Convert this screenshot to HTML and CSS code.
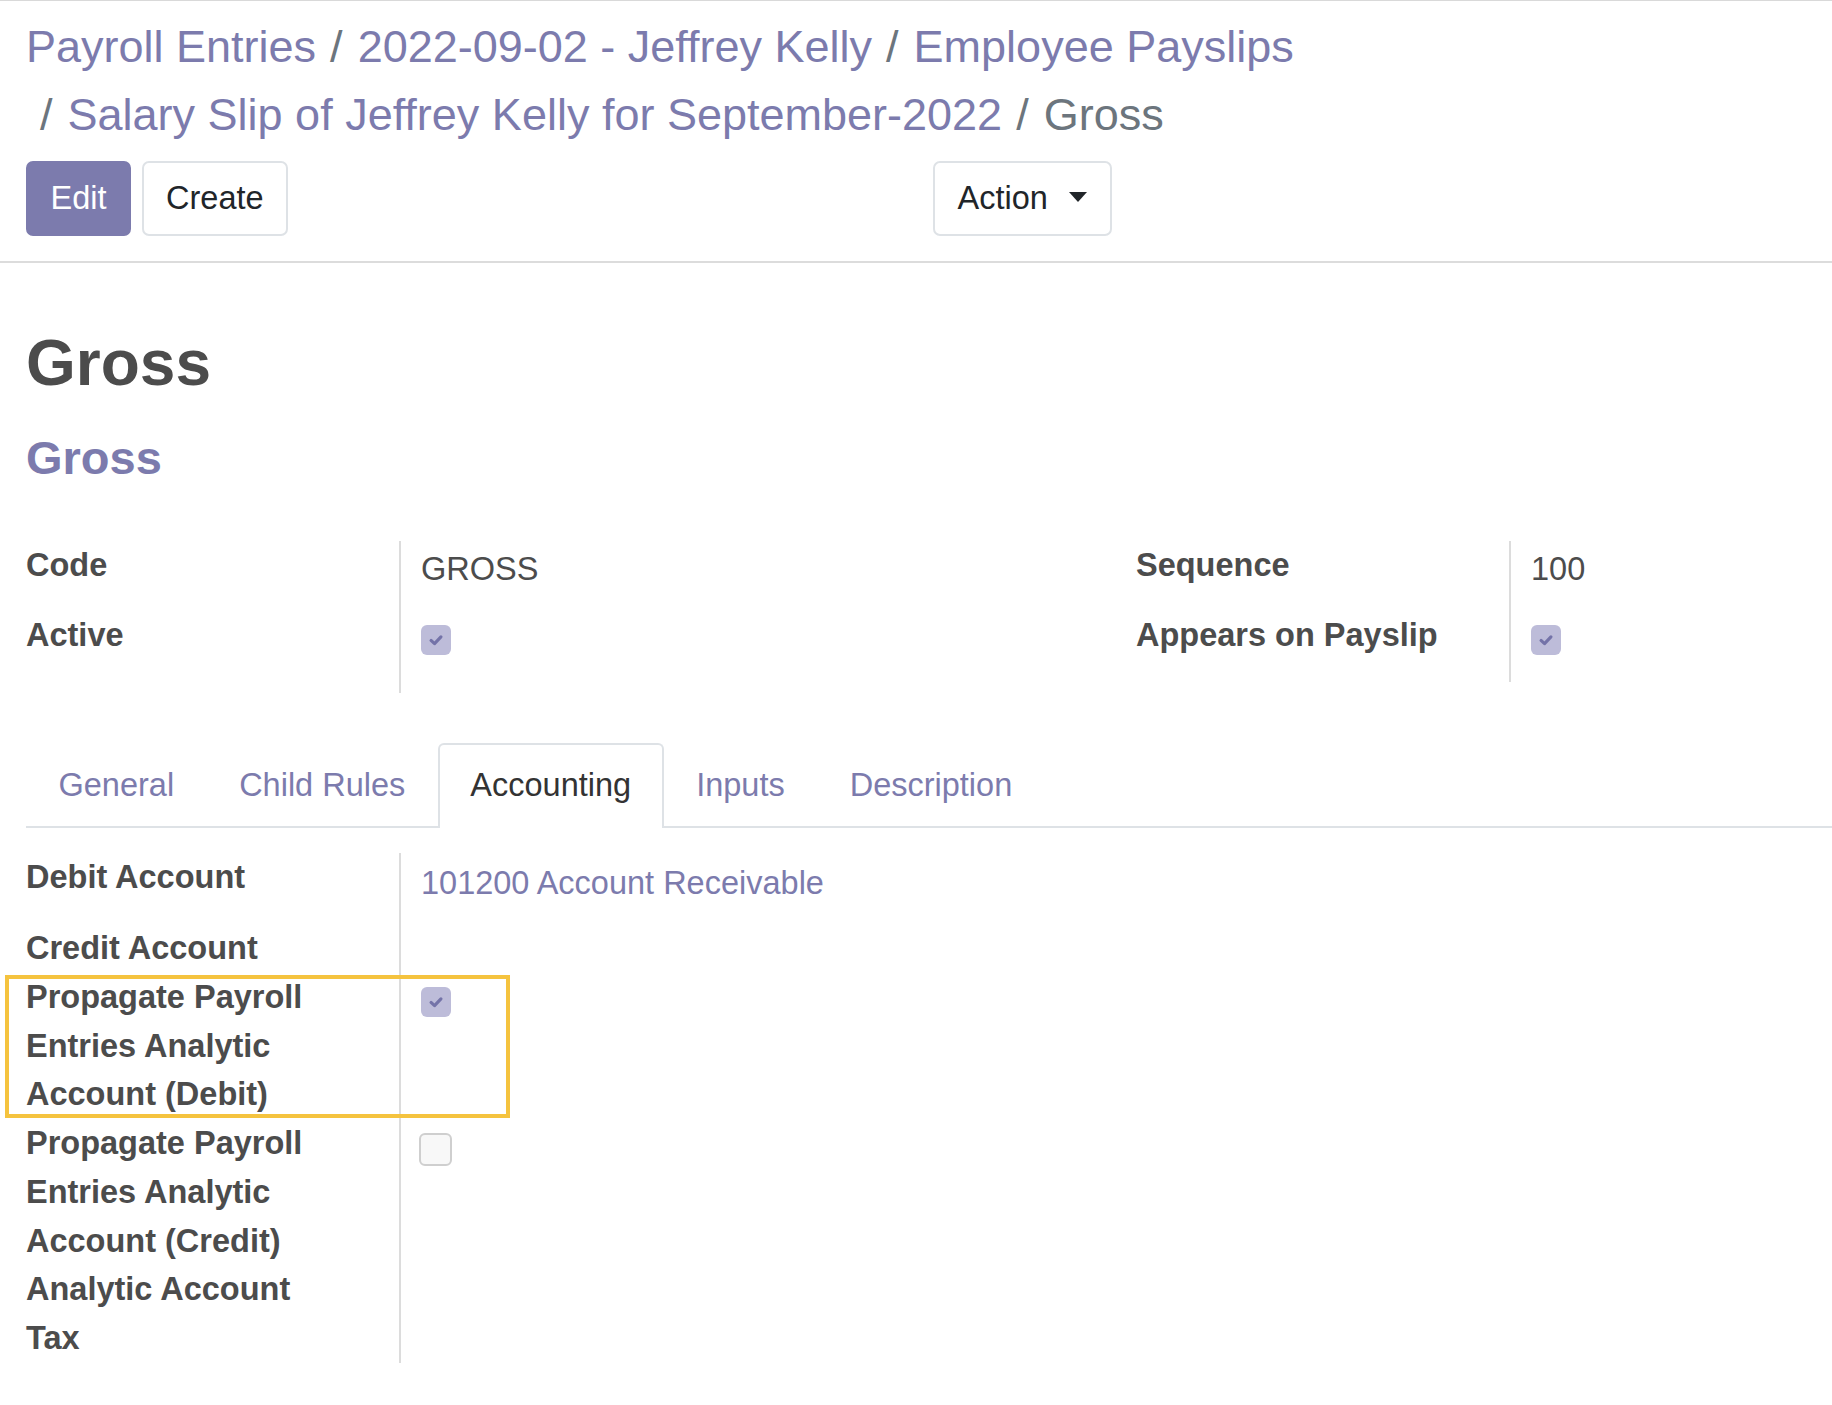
FILE: index.html
```html
<!DOCTYPE html>
<html lang="en">
<head>
<meta charset="utf-8">
<title>Gross - Salary Rule</title>
<link rel="stylesheet" href="styles.css">
</head>
<body>
<div class="page">
  <div class="control-panel">
    <ol class="breadcrumb">
      <li class="crumb"><a class="crumb-link">Payroll Entries</a></li>
      <li class="crumb"><a class="crumb-link">2022-09-02 - Jeffrey Kelly</a></li>
      <li class="crumb"><a class="crumb-link">Employee Payslips</a></li>
      <li class="crumb"><a class="crumb-link">Salary Slip of Jeffrey Kelly for September-2022</a></li>
      <li class="crumb crumb-active">Gross</li>
    </ol>
    <div class="cp-bottom">
      <div class="cp-left">
        <button class="btn btn-primary">Edit</button>
        <button class="btn btn-secondary">Create</button>
      </div>
      <div class="cp-right">
        <button class="btn btn-secondary">Action<span class="caret"></span></button>
      </div>
    </div>
  </div>

  <div class="sheet">
    <h1 class="title">Gross</h1>
    <h2 class="subtitle">Gross</h2>

    <div class="groups">
      <div class="group">
        <div class="label row-70">Code</div>
        <div class="value row-70"><span class="text-val">GROSS</span></div>
        <div class="label row-82">Active</div>
        <div class="value row-82"><span class="checkbox checked"><svg viewBox="0 0 16 16" width="18" height="18"><path d="M3.6 8.4 L6.7 11.2 L12.4 5.2" fill="none" stroke="#7473a8" stroke-width="2.8" stroke-linecap="round" stroke-linejoin="round"/></svg></span></div>
      </div>
      <div class="group">
        <div class="label row-70">Sequence</div>
        <div class="value row-70"><span class="text-val">100</span></div>
        <div class="label row-71">Appears on Payslip</div>
        <div class="value row-71"><span class="checkbox checked"><svg viewBox="0 0 16 16" width="18" height="18"><path d="M3.6 8.4 L6.7 11.2 L12.4 5.2" fill="none" stroke="#7473a8" stroke-width="2.8" stroke-linecap="round" stroke-linejoin="round"/></svg></span></div>
      </div>
    </div>

    <ul class="tabs">
      <li class="tab">General</li>
      <li class="tab">Child Rules</li>
      <li class="tab tab-active">Accounting</li>
      <li class="tab">Inputs</li>
      <li class="tab">Description</li>
    </ul>

    <div class="group acc-group">
      <div class="label row-71">Debit Account</div>
      <div class="value row-71"><a class="link-val">101200 Account Receivable</a></div>
      <div class="label">Credit Account</div>
      <div class="value"></div>
      <div class="label">Propagate Payroll<br>Entries Analytic<br>Account (Debit)</div>
      <div class="value"><span class="checkbox checked"><svg viewBox="0 0 16 16" width="18" height="18"><path d="M3.6 8.4 L6.7 11.2 L12.4 5.2" fill="none" stroke="#7473a8" stroke-width="2.8" stroke-linecap="round" stroke-linejoin="round"/></svg></span></div>
      <div class="label">Propagate Payroll<br>Entries Analytic<br>Account (Credit)</div>
      <div class="value"><span class="checkbox unchecked"></span></div>
      <div class="label">Analytic Account</div>
      <div class="value"></div>
      <div class="label">Tax</div>
      <div class="value"></div>
    </div>
  </div>

  <div class="highlight"></div>
</div>
</body>
</html>
```

FILE: styles.css
```css
html, body {
  margin: 0;
  padding: 0;
  background: #ffffff;
}

body {
  font-family: "Liberation Sans", Arial, Helvetica, sans-serif;
  color: #4c4c4c;
  overflow: hidden;
  width: 1832px;
  height: 1405px;
}

.page {
  position: relative;
  border-top: 1px solid #d9d9d9;
  min-height: 1404px;
}

/* ---------- control panel ---------- */
.control-panel {
  border-bottom: 2px solid #dcdcdc;
  padding: 12px 0 25px 26px;
}

.breadcrumb {
  list-style: none;
  margin: 0;
  padding: 0;
  display: flex;
  flex-wrap: wrap;
  width: 1500px;
  font-size: 45px;
  line-height: 67.5px;
}

.crumb {
  white-space: nowrap;
}

.crumb + .crumb {
  padding-left: 14px;
}

.crumb + .crumb::before {
  content: "/";
  color: #6c757d;
  padding-right: 15px;
}

.crumb-link {
  color: #7c7bad;
  text-decoration: none;
}

.crumb-active {
  color: #6c757d;
}

.cp-bottom {
  display: flex;
  margin-top: 13px;
}

.cp-left {
  width: 907px;
  display: flex;
  gap: 10.5px;
}

.cp-right {
  flex: 1;
  display: flex;
}

.btn {
  font-family: "Liberation Sans", Arial, Helvetica, sans-serif;
  font-size: 32.5px;
  line-height: 48.75px;
  padding: 11.3px 22.5px;
  border-radius: 7px;
  border: 2px solid #dee2e6;
  background: #ffffff;
  color: #212529;
  display: inline-flex;
  align-items: center;
}

.btn-primary {
  background: #7c7bad;
  border-color: #7c7bad;
  color: #ffffff;
}

.caret {
  display: inline-block;
  margin-left: 21px;
  margin-right: 1px;
  width: 0;
  height: 0;
  border-top: 10px solid #212529;
  border-left: 9.5px solid transparent;
  border-right: 9.5px solid transparent;
  margin-top: -4px;
}

/* ---------- sheet ---------- */
.sheet {
  padding-left: 26px;
}

.title {
  margin: 61px 0 0 0;
  font-size: 64px;
  line-height: 78px;
  font-weight: bold;
  color: #4c4c4c;
}

.subtitle {
  margin: 27px 0 0 0;
  font-size: 47px;
  line-height: 57px;
  font-weight: bold;
  color: #7c7bad;
}

.groups {
  display: grid;
  grid-template-columns: 1110px 1fr;
  align-items: start;
  margin-top: 55px;
}

.group {
  display: grid;
  grid-template-columns: 375px 1fr;
  align-content: start;
  font-size: 32.5px;
  line-height: 48.75px;
}

.label {
  font-weight: bold;
  color: #4c4c4c;
  border-right: 2px solid #dcdcdc;
}

.value {
  padding-left: 20px;
}

.row-70 { min-height: 70px; }
.row-71 { min-height: 71px; }
.row-82 { min-height: 82px; }

.text-val {
  display: block;
  padding-top: 4px;
  color: #4c4c4c;
}

.link-val {
  display: block;
  padding-top: 6px;
  color: #7c7bad;
  text-decoration: none;
}

.checkbox {
  display: flex;
  align-items: center;
  justify-content: center;
  box-sizing: border-box;
  margin-top: 14px;
  border-radius: 6px;
}

.checkbox.checked {
  width: 30px;
  height: 30px;
  background: #bdbcd9;
}

.checkbox.unchecked {
  width: 33px;
  height: 33px;
  margin-left: -2px;
  border: 2px solid #cfcfcf;
  background: #f8f8f8;
}

/* ---------- tabs ---------- */
.tabs {
  list-style: none;
  margin: 50px 0 0 0;
  padding: 0;
  display: flex;
  border-bottom: 2px solid #dee2e6;
}

.tab {
  font-size: 32.5px;
  line-height: 48.75px;
  padding: 16px 30.5px;
  border: 2px solid transparent;
  border-bottom: none;
  margin-bottom: -2px;
  color: #7c7bad;
  border-radius: 6px 6px 0 0;
}

.tab-active {
  color: #333333;
  border-color: #dee2e6;
  background: #ffffff;
  padding-bottom: 18px;
}

.acc-group {
  margin-top: 25px;
  width: 1110px;
}

/* ---------- annotation overlay ---------- */
.highlight {
  position: absolute;
  left: 5px;
  top: 974px;
  width: 505px;
  height: 143px;
  box-sizing: border-box;
  border: 4px solid #f5c33e;
  pointer-events: none;
}
```
